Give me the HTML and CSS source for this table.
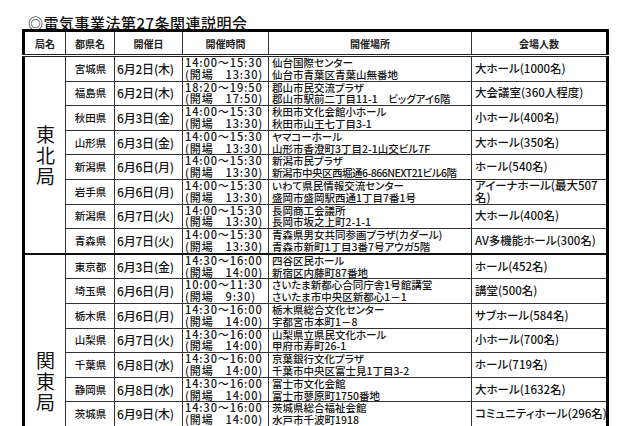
FILE: index.html
```html
<!DOCTYPE html>
<html lang="ja">
<head>
<meta charset="utf-8">
<title>電気事業法第27条関連説明会</title>
<link rel="stylesheet" href="styles.css">
</head>
<body>
<div class="page">
  <h1 class="title">◎電気事業法第27条関連説明会</h1>
  <table class="sched">
    <colgroup>
      <col class="c-bureau"><col class="c-pref"><col class="c-date"><col class="c-time"><col class="c-venue"><col class="c-cap">
    </colgroup>
    <thead>
      <tr><th>局名</th><th>都県名</th><th>開催日</th><th>開催時間</th><th>開催場所</th><th>会場人数</th></tr>
    </thead>
    <tbody>
      <tr>
        <td class="bureau" rowspan="8">東<br>北<br>局</td>
        <td class="pref">宮城県</td><td class="date">6月2日(木)</td>
        <td class="time">14:00～15:30<br>(開場　13:30)</td>
        <td class="venue">仙台国際センター<br>仙台市青葉区青葉山無番地</td>
        <td class="cap">大ホール(1000名)</td>
      </tr>
      <tr>
        <td class="pref">福島県</td><td class="date">6月2日(木)</td>
        <td class="time">18:20～19:50<br>(開場　17:50)</td>
        <td class="venue">郡山市民交流プラザ<br>郡山市駅前二丁目11-1　ビッグアイ6階</td>
        <td class="cap">大会議室(360人程度)</td>
      </tr>
      <tr>
        <td class="pref">秋田県</td><td class="date">6月3日(金)</td>
        <td class="time">14:00～15:30<br>(開場　13:30)</td>
        <td class="venue">秋田市文化会館小ホール<br>秋田市山王七丁目3-1</td>
        <td class="cap">小ホール(400名)</td>
      </tr>
      <tr>
        <td class="pref">山形県</td><td class="date">6月3日(金)</td>
        <td class="time">14:00～15:30<br>(開場　13:30)</td>
        <td class="venue">ヤマコーホール<br>山形市香澄町3丁目2-1山交ビル7F</td>
        <td class="cap">大ホール(350名)</td>
      </tr>
      <tr>
        <td class="pref">新潟県</td><td class="date">6月6日(月)</td>
        <td class="time">14:00～15:30<br>(開場　13:30)</td>
        <td class="venue">新潟市民プラザ<br><span class="tight">新潟市中央区西堀通6-866NEXT21ビル6階</span></td>
        <td class="cap">ホール(540名)</td>
      </tr>
      <tr>
        <td class="pref">岩手県</td><td class="date">6月6日(月)</td>
        <td class="time">14:00～15:30<br>(開場　13:30)</td>
        <td class="venue">いわて県民情報交流センター<br>盛岡市盛岡駅西通1丁目7番1号</td>
        <td class="cap">アイーナホール(最大507<br>名)</td>
      </tr>
      <tr>
        <td class="pref">新潟県</td><td class="date">6月7日(火)</td>
        <td class="time">14:00～15:30<br>(開場　13:30)</td>
        <td class="venue">長岡商工会議所<br>長岡市坂之上町2-1-1</td>
        <td class="cap">大ホール(400名)</td>
      </tr>
      <tr>
        <td class="pref">青森県</td><td class="date">6月7日(火)</td>
        <td class="time">14:00～15:30<br>(開場　13:30)</td>
        <td class="venue">青森県男女共同参画プラザ(カダール)<br>青森市新町1丁目3番7号アウガ5階</td>
        <td class="cap">AV多機能ホール(300名)</td>
      </tr>
      <tr class="group-start">
        <td class="bureau bureau-low" rowspan="7">関<br>東<br>局</td>
        <td class="pref">東京都</td><td class="date">6月3日(金)</td>
        <td class="time">14:30～16:00<br>(開場　14:00)</td>
        <td class="venue">四谷区民ホール<br>新宿区内藤町87番地</td>
        <td class="cap">ホール(452名)</td>
      </tr>
      <tr>
        <td class="pref">埼玉県</td><td class="date">6月6日(月)</td>
        <td class="time">10:00～11:30<br>(開場　9:30)</td>
        <td class="venue">さいたま新都心合同庁舎1号館講堂<br>さいたま市中央区新都心1－1</td>
        <td class="cap">講堂(500名)</td>
      </tr>
      <tr>
        <td class="pref">栃木県</td><td class="date">6月6日(月)</td>
        <td class="time">14:30～16:00<br>(開場　14:00)</td>
        <td class="venue">栃木県総合文化センター<br>宇都宮市本町1－8</td>
        <td class="cap">サブホール(584名)</td>
      </tr>
      <tr>
        <td class="pref">山梨県</td><td class="date">6月7日(火)</td>
        <td class="time">14:30～16:00<br>(開場　14:00)</td>
        <td class="venue">山梨県立県民文化ホール<br>甲府市寿町26-1</td>
        <td class="cap">小ホール(700名)</td>
      </tr>
      <tr>
        <td class="pref">千葉県</td><td class="date">6月8日(水)</td>
        <td class="time">14:30～16:00<br>(開場　14:00)</td>
        <td class="venue">京葉銀行文化プラザ<br>千葉市中央区富士見1丁目3-2</td>
        <td class="cap">ホール(719名)</td>
      </tr>
      <tr>
        <td class="pref">静岡県</td><td class="date">6月8日(水)</td>
        <td class="time">14:30～16:00<br>(開場　14:00)</td>
        <td class="venue">富士市文化会館<br>富士市蓼原町1750番地</td>
        <td class="cap">大ホール(1632名)</td>
      </tr>
      <tr>
        <td class="pref">茨城県</td><td class="date">6月9日(木)</td>
        <td class="time">14:30～16:00<br>(開場　14:00)</td>
        <td class="venue">茨城県総合福祉会館<br>水戸市千波町1918</td>
        <td class="cap">コミュニティホール(296名)</td>
      </tr>
    </tbody>
  </table>
</div>
</body>
</html>
```
FILE: styles.css
```css
html, body {
  margin: 0;
  padding: 0;
  background: #fff;
}
body {
  font-family: "Noto Sans CJK JP", "Noto Sans", sans-serif;
  font-weight: 500;
  color: #141414;
}
.page {
  padding: 13px 0 0 22px;
}
.title {
  margin: 0 0 -2px 6px;
  padding-top: 2px;
  font-size: 15px;
  line-height: 16px;
  font-weight: 500;
  letter-spacing: 0.5px;
  color: #111;
}
.sched {
  border-collapse: collapse;
  table-layout: fixed;
  width: 587px;
  border: 3px solid #000;
}
.c-bureau { width: 42px; }
.c-pref { width: 49px; }
.c-date { width: 68px; }
.c-time { width: 86px; }
.c-venue { width: 203px; }
.c-cap { width: 136px; }

.sched th {
  height: 22px;
  padding: 0;
  font-size: 10px;
  font-weight: bold;
  text-align: center;
  vertical-align: middle;
  border: 1px solid #333;
  border-bottom: 3px double #222;
  color: #222;
}
.sched td {
  border: 1px solid #333;
  padding: 0 1px 0 2px;
  line-height: 11.8px;
  height: 23.6px;
  vertical-align: middle;
  white-space: nowrap;
}
.sched tr.group-start td {
  border-top: 2px solid #111;
}
.bureau {
  text-align: center;
  font-size: 19px;
  font-weight: normal;
  line-height: 21px !important;
  color: #111;
}
.bureau-low {
  padding-top: 80px !important;
}
.pref {
  text-align: center;
  font-size: 10.5px;
}
.date {
  font-size: 12px;
  letter-spacing: -0.2px;
}
.time {
  font-size: 11px;
  letter-spacing: 0.9px;
}
.venue {
  font-size: 10.5px;
  padding-left: 3px !important;
  font-feature-settings: "palt";
}
.tight {
  letter-spacing: -0.5px;
}
.cap {
  font-size: 11.5px;
  padding-left: 3px !important;
  font-feature-settings: "palt";
}
```
